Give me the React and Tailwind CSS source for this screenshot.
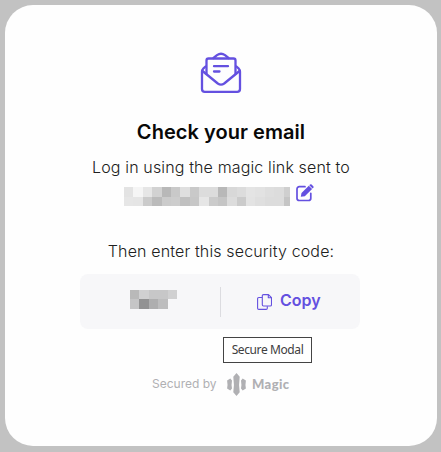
const emailRows = [
  ['#e3e3e3','#f5f5f5','#e6e6e6','#d2d2d2','#b8b8b8','#c9c9c9','#dfdfdf','#c9c9c9','#dcdcdc','#dcdcdc','#b8b8b8','#d8d8d8','#dcdcdc','#e4e4e4','#e2e2e2','#dedede','#dcdcdc','#cfcfcf'],
  ['#e6e6e6','#e5e5e5','#cbcbcb','#bbbbbb','#cbcbcb','#cdcdcd','#c0c0c0','#c7c7c7','#e6e6e6','#cbcbcb','#c5c5c5','#dcdcdc','#cbcbcb','#e3e3e3','#dfdfdf','#dcdcdc','#dcdcdc','#c5c5c5'],
];
const codeRows = [
  ['#b9b9b9', '#d0d0d1', '#c7c7c8', '#c7c7c8', '#d0d0d1'],
  ['#c5c5c6', '#929293', '#aeaeaf', '#bdbdbe', '#f7f7f9'],
];

function Mosaic({ rows, className }) {
  return (
    <div className={`flex flex-col overflow-hidden ${className}`}>
      {rows.map((row, i) => (
        <div key={i} className="flex h-[9.5px]">
          {row.map((color, j) => (
            <span key={j} className="w-[9.4px] shrink-0" style={{ backgroundColor: color }} />
          ))}
        </div>
      ))}
    </div>
  );
}

function EnvelopeIcon() {
  return (
    <svg className="block h-[42px] w-[42px]" viewBox="0 0 42 42" fill="none" stroke="#6450e0" strokeWidth="2.3" strokeLinejoin="round" strokeLinecap="round">
      <path d="M5.500 14.500 3.500 16.300Q2 17.800 2 20v17a2.800 2.800 0 0 0 2.800 2.800h32.400A2.800 2.800 0 0 0 40 37V20q0-2.200-1.500-3.700l-2-1.800" />
      <path d="M13.500 6 17 3.200Q21 .2 25 3.200L28.500 6" />
      <path d="M6.500 22V8.500Q6.500 6.500 8.500 6.500h25q2 0 2 2V22" />
      <path d="m2.500 19 15.300 12.500q3.200 2.300 6.400 0l15.300-12.500" />
      <path d="M14 14.200h14M14 19.500h5.500" />
    </svg>
  );
}

function EditIcon() {
  return (
    <svg className="block h-[18px] w-[18px]" viewBox="0 0 18 18" fill="none">
      <path d="M9 2.700H3.300A2.300 2.300 0 0 0 1 5v9.200a2.300 2.300 0 0 0 2.300 2.300h9.200a2.300 2.300 0 0 0 2.300-2.300V9.300" stroke="#6450e0" strokeWidth="1.700" strokeLinecap="round" />
      <path d="m4.800 12.700.7-3.700 7.300-7.300 3.300 3.300-7.300 7.300-4 .4ZM13.300 1.200l.7-.7q.8-.7 1.600 0l1.700 1.700q.7.800 0 1.600l-.7.700-3.300-3.300Z" fill="#6450e0" />
    </svg>
  );
}

function CopyIcon() {
  return (
    <svg className="block h-4 w-[15px]" viewBox="0 0 15 16" fill="none" stroke="#6450e0" strokeWidth="1.100" strokeLinejoin="round">
      <path d="M6.500.6h5l3 3v7.200q0 1.200-1.200 1.200H6.500q-1.200 0-1.200-1.200V1.800Q5.300.6 6.500.6M11.300.8v3h3" />
      <path d="M5.200 3.500H1.800Q.6 3.500.6 4.700v9.500q0 1.200 1.200 1.200h7.300q1.200 0 1.200-1.200v-2" />
    </svg>
  );
}

function MagicLogo() {
  return (
    <svg className="block h-[23px] w-[19px]" viewBox="0 0 19 23" fill="#b0b0b3">
      <path d="m9.500 0 3.200 3.700q-1.200 7.800 0 15.600L9.500 23 6.300 19.300q1.200-7.800 0-15.600Z" />
      <path d="m3.300 5.500 1.700 1.900q-.8 4.100 0 8.200l-1.700 1.900L.1 15.600q.8-4.100 0-8.200Z" />
      <path d="m15.700 5.500 3.200 1.900q-.8 4.100 0 8.200l-3.200 1.900-1.700-1.900q.8-4.100 0-8.200Z" />
    </svg>
  );
}

export default function App() {
  return (
    <main className="h-[452px] w-[441px] bg-[#c2c2c2] pt-[5px] pl-[5px] font-['Inter',sans-serif]">
      <section className="flex h-[441px] w-[432px] flex-col items-center rounded-[28px] bg-[#fefefe] pt-[47px] text-[#202020]">
        <EnvelopeIcon />
        <h1 className="mt-[24px] h-7 text-[20px] leading-7 font-semibold tracking-[0.05px] whitespace-nowrap text-[#080808]">Check your email</h1>
        <p className="mt-[9px] h-6 text-base leading-6 font-light tracking-[0.14px] whitespace-nowrap">Log in using the magic link sent to</p>
        <div className="mt-[3px] flex h-6 w-full items-start pl-[119px]">
          <Mosaic rows={emailRows} className="mt-[5px] w-[166px]" />
          <button className="mt-[2px] ml-[6px]" aria-label="Edit email"><EditIcon /></button>
        </div>
        <p className="mt-[33px] h-6 text-base leading-6 font-light tracking-[0.14px] whitespace-nowrap">Then enter this security code:</p>
        <div className="mt-[11px] ml-[75px] flex h-[55px] w-[280px] items-center self-start rounded-lg bg-[#f7f7f9]">
          <div className="flex w-[140px] pb-[5px] pl-[50px]"><Mosaic rows={codeRows} className="w-[47px]" /></div>
          <div className="h-[30px] w-px bg-[#dcdce0]" />
          <button className="flex h-full items-center gap-[8px] pl-[36px] text-base font-semibold text-[#6450e0]">
            <CopyIcon />
            <span className="pb-[3px]">Copy</span>
          </button>
        </div>
        <div className="mt-2 ml-[218px] flex h-[26px] w-[89px] items-center justify-center self-start border border-[#444] bg-white font-['Noto_Sans',sans-serif] text-[12px] tracking-[-0.4px] whitespace-nowrap text-[#404040]">Secure Modal</div>
        <footer className="mt-[10px] ml-[147px] flex h-[23px] items-center self-start text-[12px] whitespace-nowrap text-[#b0b0b3]">
          <span className="w-[75px] pb-[2px]">Secured by</span>
          <MagicLogo />
          <span className="ml-[6px] pt-px font-['Lato',sans-serif] text-[13px] font-black tracking-[0.4px]">Magic</span>
        </footer>
      </section>
    </main>
  );
}
